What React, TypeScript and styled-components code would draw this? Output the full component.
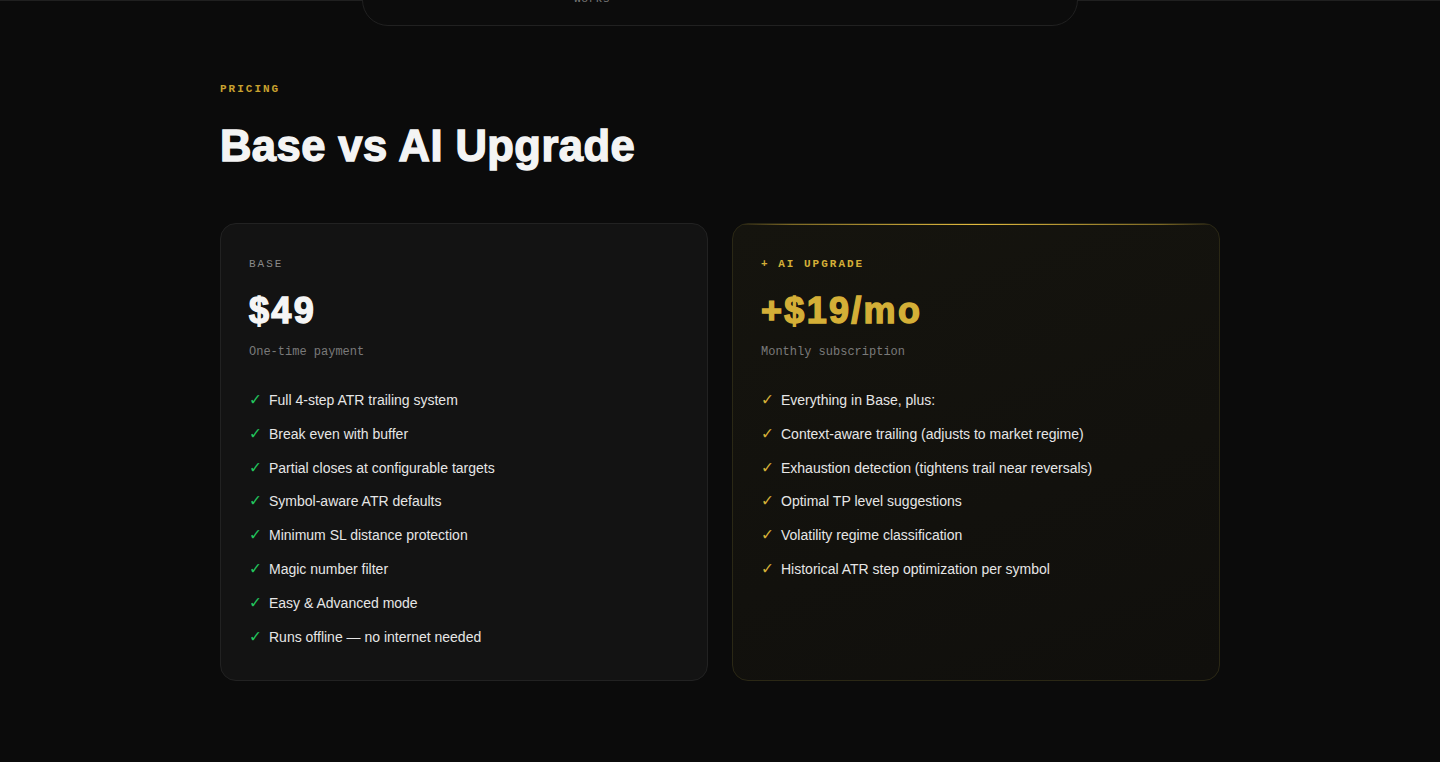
import React from "react";
import styled, { createGlobalStyle } from "styled-components";

const GlobalStyle = createGlobalStyle`
  html, body { margin: 0; padding: 0; background: #0b0b0b; }
  body { font-family: "Liberation Sans", Arial, sans-serif; color: #f2f2f2; }
  * { box-sizing: border-box; }
`;

const Page = styled.div`
  min-height: 762px;
  background: #0b0b0b;
  border-top: 1px solid #202020;
`;

const TopStrip = styled.div`
  height: 26px;
  overflow: hidden;
  display: flex;
  justify-content: center;
  margin-top: -1px;
`;

const NavPanel = styled.div`
  width: 716px;
  height: 80px;
  margin-top: -54px;
  border: 1px solid #212121;
  border-radius: 26px;
  background: #0c0c0c;
  display: flex;
  align-items: flex-end;
  padding: 0 0 19px 211px;
`;

const NavText = styled.span`
  font-family: "Liberation Mono", "Courier New", monospace;
  font-size: 11.5px;
  line-height: 14px;
  color: #7a7a7a;
  letter-spacing: 0.3px;
`;

const Section = styled.section`
  width: 1000px;
  margin: 0 auto;
  padding-top: 55px;
`;

const Eyebrow = styled.div<{ $color?: string; $weight?: number }>`
  font-family: "Liberation Mono", "Courier New", monospace;
  font-size: 11px;
  line-height: 16px;
  font-weight: ${(p) => p.$weight ?? 700};
  letter-spacing: 2px;
  text-transform: uppercase;
  color: ${(p) => p.$color || "#c9a22f"};
`;

const Heading = styled.h2`
  margin: 26px 0 52px;
  font-family: "Liberation Sans", Arial, sans-serif;
  font-weight: 700;
  font-size: 43.5px;
  line-height: 1.1;
  color: #f4f4f4;
  letter-spacing: 0.45px;
  -webkit-text-stroke: 1.4px #f4f4f4;
`;

const Grid = styled.div`
  display: grid;
  grid-template-columns: 1fr 1fr;
  gap: 24px;
`;

const Card = styled.div<{ $accent?: boolean }>`
  position: relative;
  height: 458px;
  border-radius: 16px;
  padding: 32px 28px;
  border: 1px solid ${(p) => (p.$accent ? "#2b2815" : "#222222")};
  background: ${(p) =>
    p.$accent
      ? "linear-gradient(160deg, #15140e 0%, #12110d 60%, #100f0c 100%)"
      : "#131313"};
  overflow: hidden;
`;

const TopGlow = styled.div`
  position: absolute;
  top: 0;
  left: 0;
  right: 0;
  height: 1px;
  background: linear-gradient(
    90deg,
    rgba(212, 175, 55, 0) 0%,
    rgba(212, 175, 55, 0.55) 12%,
    rgba(226, 186, 62, 1) 50%,
    rgba(212, 175, 55, 0.55) 88%,
    rgba(212, 175, 55, 0) 100%
  );
`;

const Label = styled(Eyebrow)`
  margin-bottom: 19px;
`;

const Price = styled.div<{ $accent?: boolean }>`
  font-family: "Liberation Sans", Arial, sans-serif;
  font-weight: 700;
  font-size: 36px;
  line-height: 40px;
  letter-spacing: 2.3px;
  color: ${(p) => (p.$accent ? "#d4af37" : "#f5f5f5")};
  -webkit-text-stroke: 1.4px ${(p) => (p.$accent ? "#d4af37" : "#f5f5f5")};
  margin-bottom: 12px;
`;

const Sub = styled.div`
  font-family: "Liberation Mono", "Courier New", monospace;
  font-size: 12px;
  line-height: 18px;
  color: #7a7a7a;
  margin-bottom: 28px;
`;

const List = styled.ul`
  list-style: none;
  margin: 0;
  padding: 0;
  display: flex;
  flex-direction: column;
  gap: 11.85px;
`;

const Item = styled.li`
  display: flex;
  align-items: center;
  gap: 10px;
  font-family: "Liberation Sans", Arial, sans-serif;
  font-size: 14px;
  line-height: 22px;
  color: #e6e6e6;
`;

const Check = styled.span<{ $color: string }>`
  width: 10px;
  font-family: "DejaVu Sans", sans-serif;
  font-size: 15.5px;
  line-height: 22px;
  color: ${(p) => p.$color};
`;

const baseFeatures = [
  "Full 4-step ATR trailing system",
  "Break even with buffer",
  "Partial closes at configurable targets",
  "Symbol-aware ATR defaults",
  "Minimum SL distance protection",
  "Magic number filter",
  "Easy & Advanced mode",
  "Runs offline \u2014 no internet needed",
];

const aiFeatures = [
  "Everything in Base, plus:",
  "Context-aware trailing (adjusts to market regime)",
  "Exhaustion detection (tightens trail near reversals)",
  "Optimal TP level suggestions",
  "Volatility regime classification",
  "Historical ATR step optimization per symbol",
];

export default function App() {
  return (
    <>
      <GlobalStyle />
      <Page>
        <TopStrip>
          <NavPanel>
            <NavText>works</NavText>
          </NavPanel>
        </TopStrip>
        <Section>
          <Eyebrow>Pricing</Eyebrow>
          <Heading>Base vs AI Upgrade</Heading>
          <Grid>
            <Card>
              <Label $color="#8a8a8a" $weight={400}>
                Base
              </Label>
              <Price>$49</Price>
              <Sub>One-time payment</Sub>
              <List>
                {baseFeatures.map((f) => (
                  <Item key={f}>
                    <Check $color="#22c55e">✓</Check>
                    {f}
                  </Item>
                ))}
              </List>
            </Card>
            <Card $accent>
              <TopGlow />
              <Label $color="#d4af37">+ AI Upgrade</Label>
              <Price $accent>+$19/mo</Price>
              <Sub>Monthly subscription</Sub>
              <List>
                {aiFeatures.map((f) => (
                  <Item key={f}>
                    <Check $color="#d4af37">✓</Check>
                    {f}
                  </Item>
                ))}
              </List>
            </Card>
          </Grid>
        </Section>
      </Page>
    </>
  );
}
